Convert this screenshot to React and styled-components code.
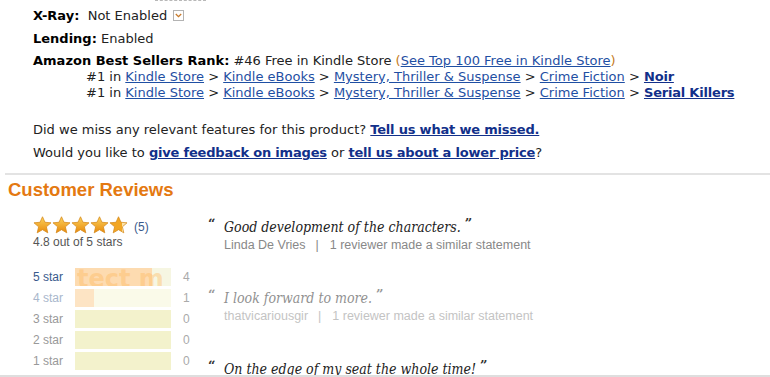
import React from 'react';
import styled, { createGlobalStyle } from 'styled-components';

const GlobalStyle = createGlobalStyle`
  html, body {
    margin: 0;
    padding: 0;
    background: #fff;
  }
`;

const Page = styled.div`
  position: relative;
  height: 375px;
  overflow: hidden;
  border-bottom: 2px solid #dedede;
  background: #fff;
`;

const CutOff = styled.div`
  position: absolute;
  left: 155px;
  top: 0;
  width: 51px;
  border-top: 1px dashed #b8b8b8;
`;

const Details = styled.ul`
  list-style: none;
  margin: 0;
  padding: 8px 0 0 33px;
  font: 13px/16px "DejaVu Sans", Verdana, sans-serif;
  color: #222;
`;

const Item = styled.li`
  margin-bottom: ${props => props.gap || 7}px;
  white-space: nowrap;
`;

const Label = styled.b`
  color: #000;
`;

const SubLine = styled.div`
  padding-left: 53px;
`;

const Link = styled.a`
  color: ${props => (props.bold ? '#12308a' : '#1f4fa3')};
  font-weight: ${props => (props.bold ? 'bold' : 'normal')};
  letter-spacing: ${props => (props.bold ? '-0.2px' : '0')};
  text-decoration: underline;
  cursor: pointer;
`;

const Paren = styled.span`
  color: #c47a1c;
`;

const DropBox = styled.svg`
  width: 11px;
  height: 11px;
  margin-left: 6px;
  vertical-align: -1px;
`;

const Feedback = styled.div`
  margin-top: 21px;
  display: flex;
  flex-direction: column;
  gap: 7px;
`;

const Rule = styled.hr`
  margin: 12px 0 0 5px;
  border: 0;
  height: 2px;
  background: #e3e3e3;
`;

const Heading = styled.h2`
  margin: 5px 0 0 8px;
  font: bold 18.5px/20px "Liberation Sans", Arial, sans-serif;
  color: #e47911;
`;

const Reviews = styled.div`
  display: grid;
  grid-template-columns: 175px 1fr;
  padding: 19px 0 0 33px;
  font-family: "Liberation Sans", Arial, sans-serif;
`;

const Summary = styled.div`
  display: flex;
  flex-direction: column;
`;

const StarRow = styled.div`
  display: flex;
  align-items: center;
  gap: 6px;
  height: 16px;
`;

const Count = styled.span`
  font-size: 12px;
  color: #3a5a8c;
`;

const Average = styled.div`
  font-size: 12px;
  line-height: 14px;
  color: #555;
`;

const Histogram = styled.div`
  margin-top: 19px;
  display: flex;
  flex-direction: column;
  gap: 3px;
`;

const BarRow = styled.div`
  display: grid;
  grid-template-columns: 42px 96px auto;
  align-items: center;
  height: 18px;
  font-size: 12px;
`;

const BarLabel = styled.span`
  color: ${props => props.tone};
`;

const Bar = styled.div`
  position: relative;
  height: 18px;
  overflow: hidden;
  background: ${props => props.track};
`;

const Fill = styled.div`
  height: 100%;
  background: ${props => props.color};
`;

const Watermark = styled.span`
  position: absolute;
  left: 2px;
  top: -2px;
  font: bold 24px/26px "DejaVu Sans", Verdana, sans-serif;
  color: rgba(255, 182, 90, 0.4);
  white-space: nowrap;
`;

const BarCount = styled.span`
  margin-left: 12px;
  color: #aaa;
`;

const Quotes = styled.div`
  margin-top: -3px;
  display: flex;
  flex-direction: column;
  gap: 35px;
`;

const Quote = styled.div`
  opacity: ${props => (props.faded ? 0.5 : 1)};
`;

const QuoteText = styled.div`
  position: relative;
  padding-left: 16px;
  font: italic 14px/18px "DejaVu Serif Condensed", "DejaVu Serif", Georgia, serif;
  font-stretch: condensed;
  color: #222;
  white-space: nowrap;
`;

const Mark = styled.span`
  font: bold 13px "DejaVu Serif", Georgia, serif;
  font-style: normal;
  color: #333;
  vertical-align: 4px;
  ${props => (props.open ? 'position: absolute; left: 0; top: 0;' : 'margin-left: 4px;')}
`;

const Byline = styled.div`
  margin-top: 2px;
  padding-left: 16px;
  font-size: 12.5px;
  line-height: 14px;
  color: #888;
  white-space: nowrap;
`;

const Divider = styled.span`
  margin: 0 11px 0 10px;
`;

function Star({ id, fill }) {
  return (
    <svg width="19" height="18" viewBox="0 0 20 19">
      <defs>
        <linearGradient id={`g${id}`} x1="0" y1="0" x2="0" y2="1">
          <stop offset="0" stopColor="#fcd25c" />
          <stop offset="1" stopColor="#e88a0c" />
        </linearGradient>
        <linearGradient id={`p${id}`} x1="0" y1="0" x2="1" y2="0">
          <stop offset={fill} stopColor="#f2a623" />
          <stop offset={fill} stopColor="#fbe3a8" />
        </linearGradient>
      </defs>
      <path
        d="M10 0.8 L12.6 6.6 L19 7.2 L14.1 11.4 L15.6 17.8 L10 14.4 L4.4 17.8 L5.9 11.4 L1 7.2 L7.4 6.6 Z"
        fill={fill < 1 ? `url(#p${id})` : `url(#g${id})`}
        stroke="#d58a1c"
        strokeWidth="0.8"
      />
    </svg>
  );
}

const bars = [
  { label: '5 star', count: 4, pct: 80, tone: '#3a5a8c', fill: '#fddbb0', track: '#f6f6e2', mark: true },
  { label: '4 star', count: 1, pct: 20, tone: '#a9b7cc', fill: '#fde4c4', track: '#fafae9' },
  { label: '3 star', count: 0, pct: 0, tone: '#999', fill: '#f3f2cc', track: '#f3f2cc' },
  { label: '2 star', count: 0, pct: 0, tone: '#999', fill: '#f3f2cc', track: '#f3f2cc' },
  { label: '1 star', count: 0, pct: 0, tone: '#999', fill: '#f3f2cc', track: '#f3f2cc' },
];

const quotes = [
  { text: 'Good development of the characters.', by: 'Linda De Vries' },
  { text: 'I look forward to more.', by: 'thatvicariousgir', faded: true },
  { text: 'On the edge of my seat the whole time!' },
];

const path = ['Kindle Store', 'Kindle eBooks', 'Mystery, Thriller & Suspense', 'Crime Fiction'];

function RankLine({ leaf }) {
  return (
    <SubLine>
      #1 in{' '}
      {path.map(p => (
        <React.Fragment key={p}>
          <Link>{p}</Link> &gt;{' '}
        </React.Fragment>
      ))}
      <Link bold>{leaf}</Link>
    </SubLine>
  );
}

export default function App() {
  return (
    <Page>
      <GlobalStyle />
      <CutOff />
      <Details>
        <Item>
          <Label>X-Ray:</Label>&nbsp; Not Enabled
          <DropBox viewBox="0 0 11 11">
            <rect x="0.5" y="0.5" width="10" height="10" fill="#fff" stroke="#b3b3b3" />
            <path d="M2.8 4 L5.5 6.7 L8.2 4" fill="none" stroke="#c87a2a" strokeWidth="1.3" />
          </DropBox>
        </Item>
        <Item gap={6}>
          <Label>Lending:</Label> Enabled
        </Item>
        <Item>
          <Label>Amazon Best Sellers Rank:</Label> #46 Free in Kindle Store{' '}
          <Paren>(</Paren><Link>See Top 100 Free in Kindle Store</Link><Paren>)</Paren>
          <RankLine leaf="Noir" />
          <RankLine leaf="Serial Killers" />
        </Item>
        <Feedback>
          <div>
            Did we miss any relevant features for this product? <Link bold>Tell us what we missed.</Link>
          </div>
          <div>
            Would you like to <Link bold>give feedback on images</Link> or{' '}
            <Link bold>tell us about a lower price</Link>?
          </div>
        </Feedback>
      </Details>
      <Rule />
      <Heading>Customer Reviews</Heading>
      <Reviews>
        <Summary>
          <StarRow>
            <div>
              {[1, 1, 1, 1, 0.7].map((f, i) => (
                <Star key={i} id={i} fill={f} />
              ))}
            </div>
            <Count>(5)</Count>
          </StarRow>
          <Average>4.8 out of 5 stars</Average>
          <Histogram>
            {bars.map(b => (
              <BarRow key={b.label}>
                <BarLabel tone={b.tone}>{b.label}</BarLabel>
                <Bar track={b.track}>
                  <Fill color={b.fill} style={{ width: `${b.pct}%` }} />
                  {b.mark && <Watermark>tect m</Watermark>}
                </Bar>
                <BarCount>{b.count}</BarCount>
              </BarRow>
            ))}
          </Histogram>
        </Summary>
        <Quotes>
          {quotes.map(q => (
            <Quote key={q.text} faded={q.faded}>
              <QuoteText>
                <Mark open>“</Mark>
                {q.text}
                <Mark>”</Mark>
              </QuoteText>
              {q.by && (
                <Byline>
                  {q.by}
                  <Divider>|</Divider>1 reviewer made a similar statement
                </Byline>
              )}
            </Quote>
          ))}
        </Quotes>
      </Reviews>
    </Page>
  );
}
